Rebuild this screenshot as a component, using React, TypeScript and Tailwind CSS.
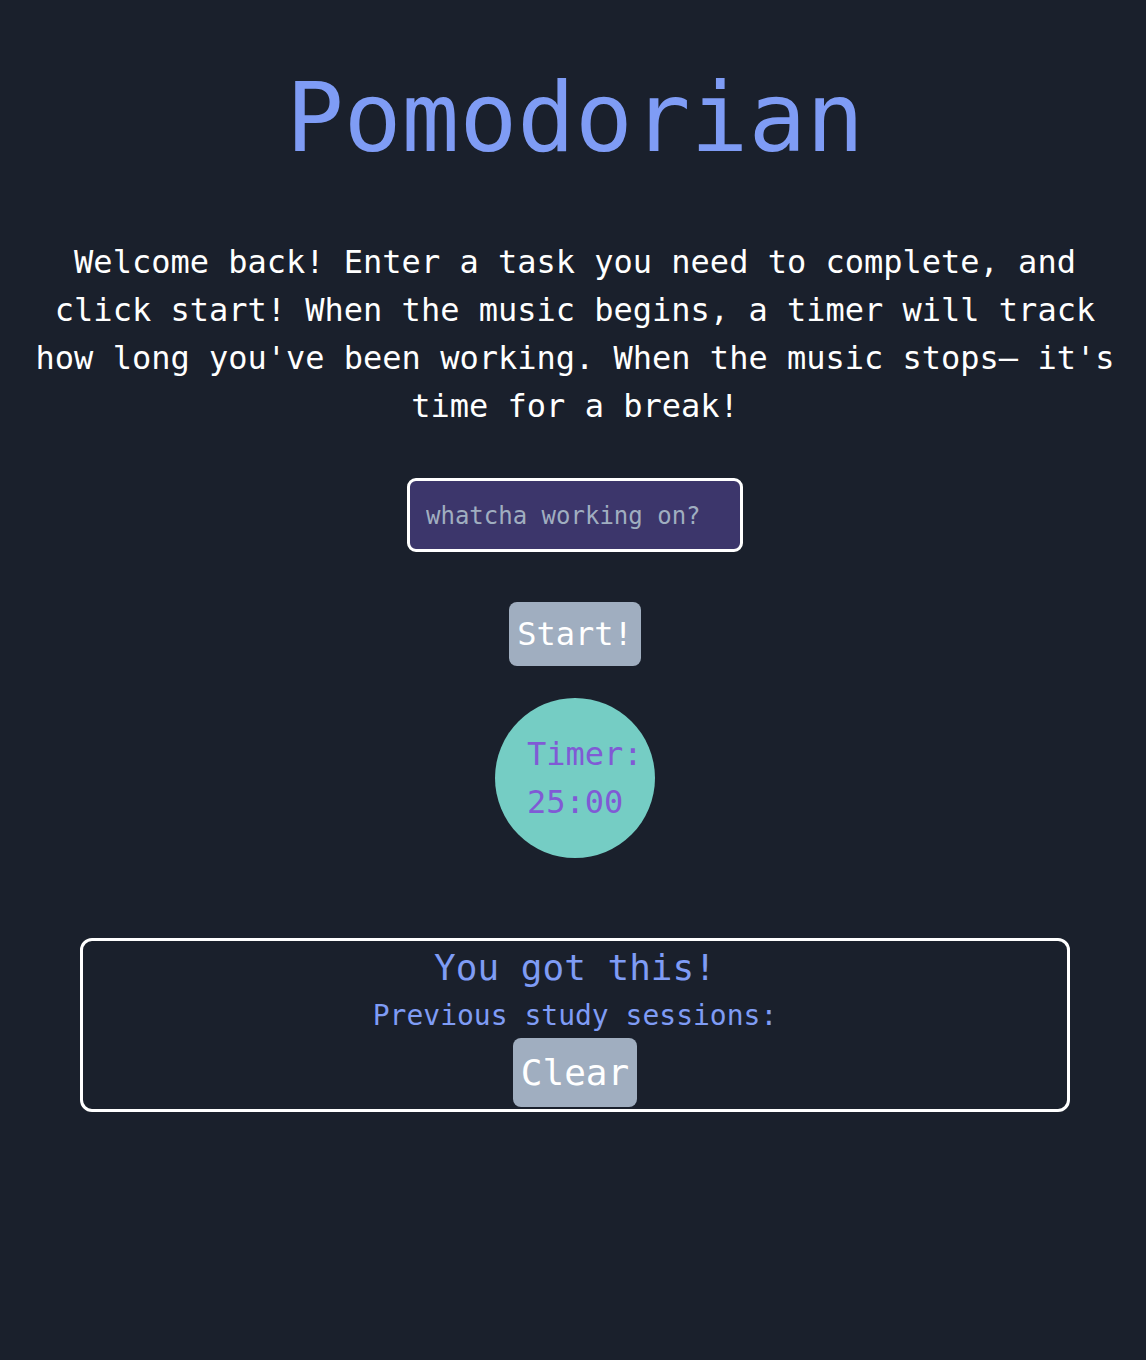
import React from "react";

export default function App() {
  return (
    <div
      className="min-h-[1360px] w-full bg-[#1a202c] text-white"
      style={{ fontFamily: '"DejaVu Sans Mono", "Liberation Mono", monospace' }}
    >
      <div className="flex flex-col items-center pl-1 pt-[70px]">
        <h1 className="text-[96px] leading-[96px] text-[#7f9cf5]">Pomodorian</h1>
        <p className="mt-[72px] px-[18px] text-center text-[32px] leading-[48px] text-white">
          Welcome back! Enter a task you need to complete, and click start! When the music begins, a timer will track how long you've been working. When the music stops— it's time for a break!
        </p>
        <input
          type="text"
          placeholder="whatcha working on?"
          className="mt-[48px] h-[74px] w-[336px] rounded-[9px] border-[3px] border-white bg-[#3c366b] px-4 pt-[2px] text-[24px] leading-[36px] text-white placeholder:text-[#a0aec0] outline-none"
        />
        <button className="mt-[50px] h-[64px] rounded-[8px] bg-[#a0aec0] px-2 text-[32px] leading-[48px] text-white">
          Start!
        </button>
        <div className="mt-[32px] flex h-[160px] w-[160px] flex-col justify-center rounded-full bg-[#75cdc4] pl-[32px] text-[32px] leading-[48px] text-[#805ad5]">
          <span>Timer:</span>
          <span>25:00</span>
        </div>
        <div className="mt-[80px] flex h-[174px] w-[990px] flex-col items-center rounded-[12px] border-[3px] border-white pb-[2px]">
          <h2 className="text-[36px] leading-[54px] text-[#7f9cf5]">You got this!</h2>
          <h3 className="text-[28px] leading-[42px] text-[#7f9cf5]">Previous study sessions:</h3>
          <button className="mt-[1px] h-[69px] rounded-[8px] bg-[#a0aec0] px-2 text-[36px] leading-[54px] text-white">
            Clear
          </button>
        </div>
      </div>
    </div>
  );
}
